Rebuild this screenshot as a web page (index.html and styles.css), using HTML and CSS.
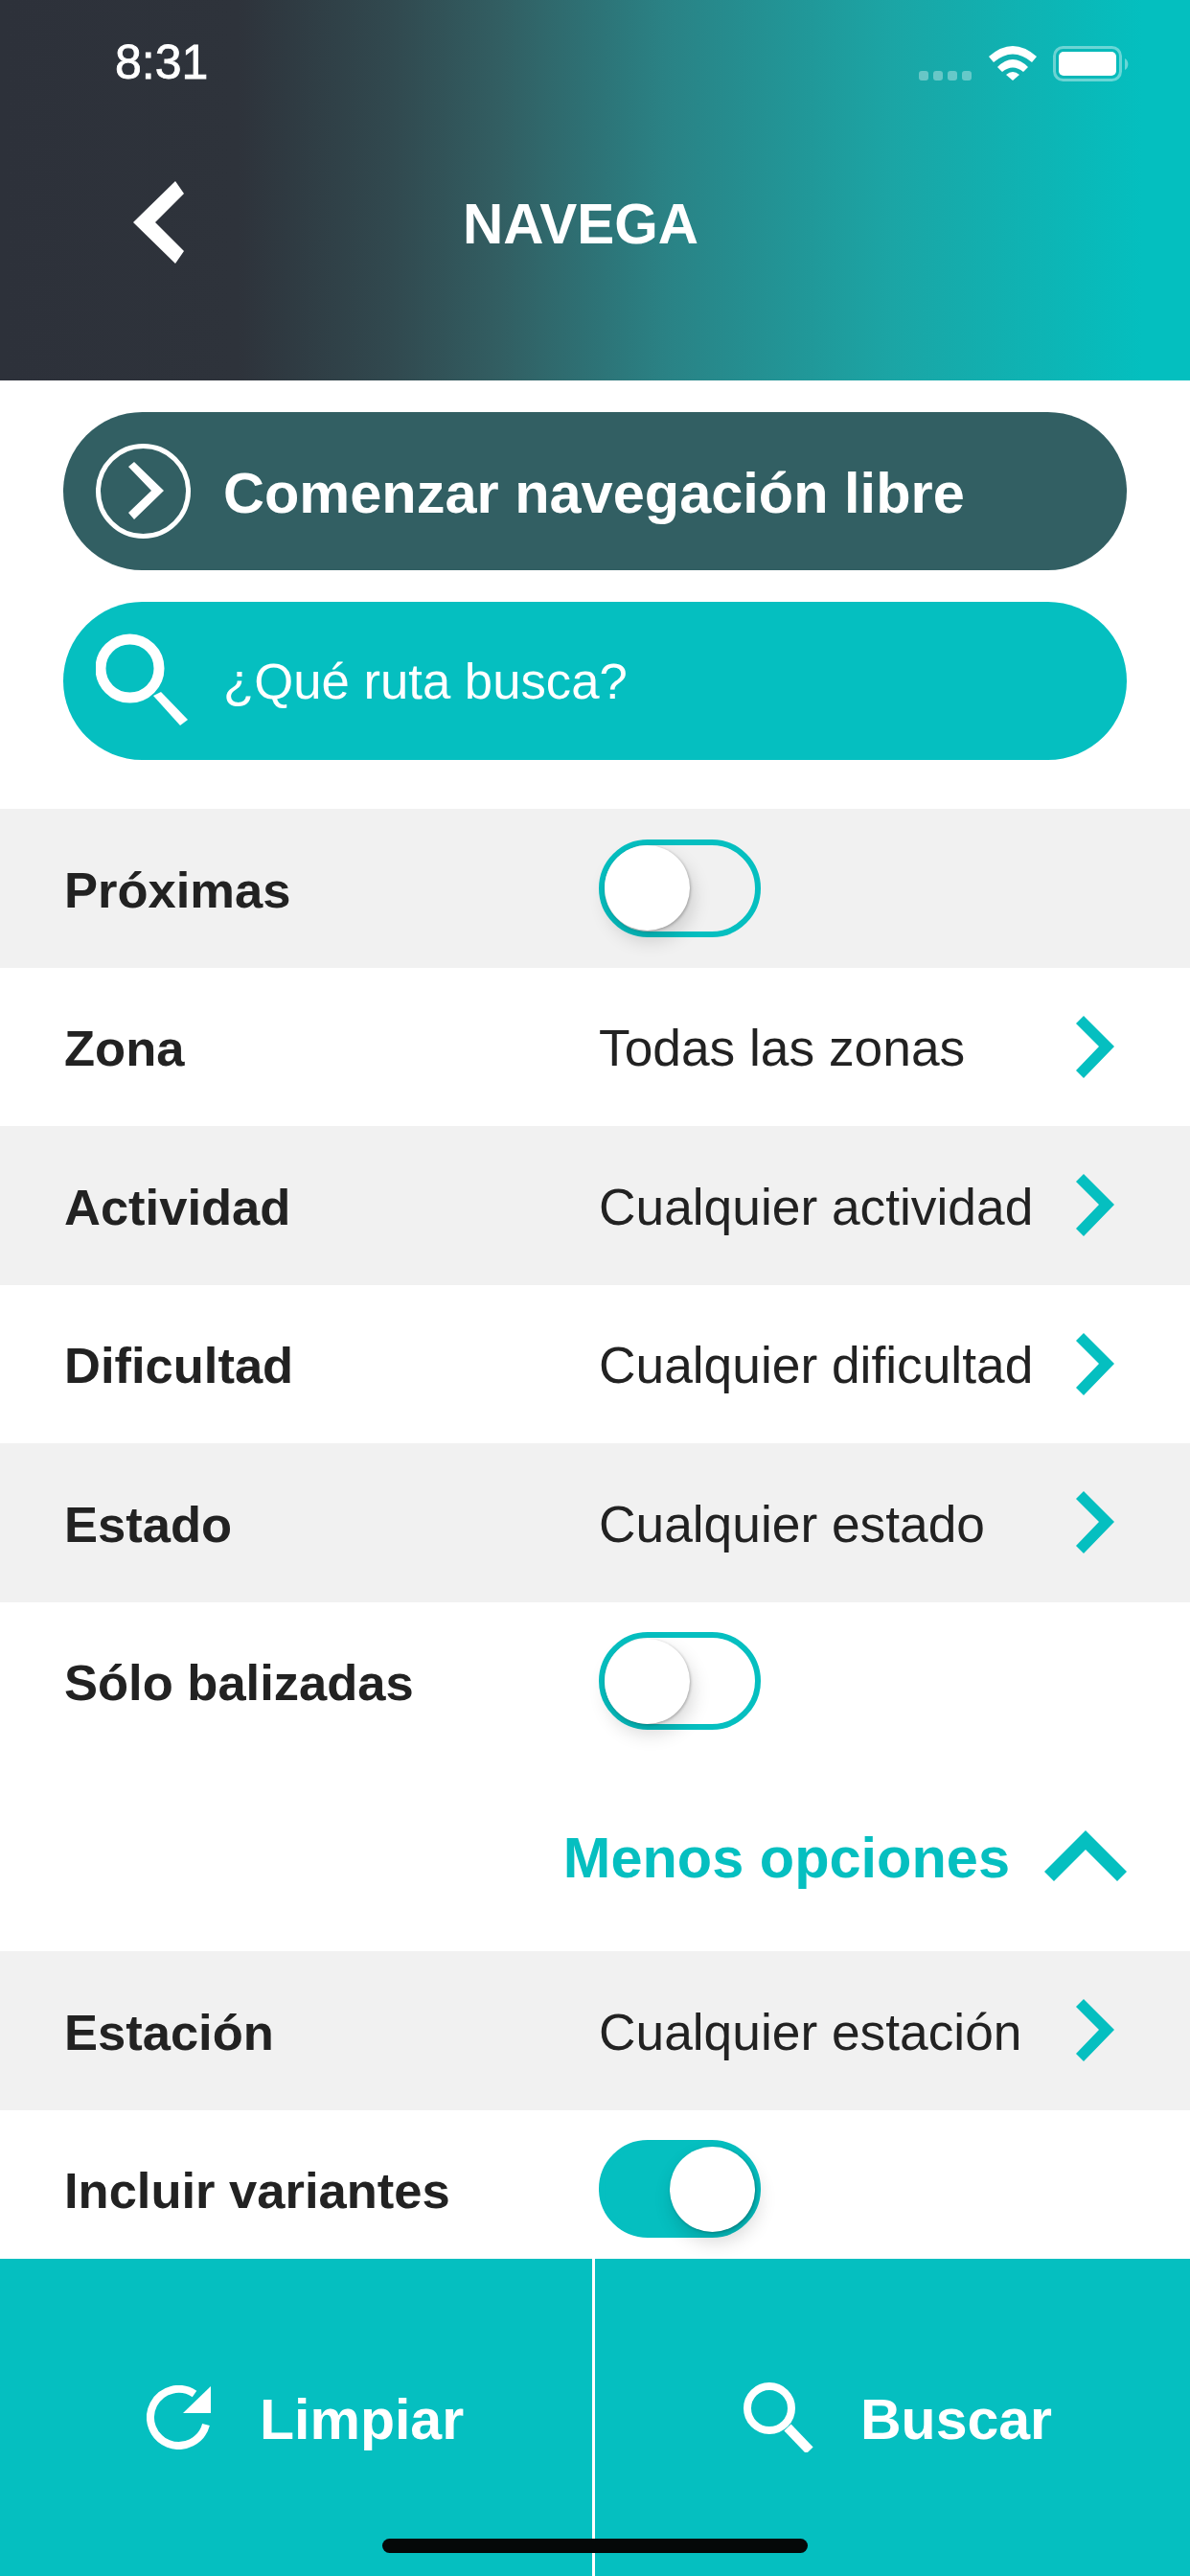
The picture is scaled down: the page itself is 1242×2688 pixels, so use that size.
FILE: index.html
```html
<!DOCTYPE html>
<html>
<head>
	<meta charset="utf-8">
	<title>Navega</title>
	<link rel="stylesheet" href="styles.css">
</head>

<body>
	<div class="page">
		<header class="top">
			<div class="status">
				<span class="time">8:31</span>
				<div class="status-icons">
					<div class="dots"><i></i><i></i><i></i><i></i></div>
					<svg class="wifi" viewBox="0 0 50 36"><path d="M0 11 Q25 -11 50 11 L45 17 Q25 0 5 17 Z"/><path d="M9 22 Q25 6 41 22 L36 27 Q25 18 14 27 Z"/><path d="M18 30 Q25 24 32 30 L25 36 Z"/></svg>
					<svg class="battery" viewBox="0 0 80 37"><rect x="1.5" y="1.5" width="69" height="34" rx="9" fill="none" stroke="#fff" stroke-opacity=".4" stroke-width="3"/><rect x="6" y="6" width="60" height="25" rx="5" fill="#fff"/><path d="M75 13 A7 7 0 0 1 75 25 Z" fill="#fff" fill-opacity=".4"/></svg>
				</div>
			</div>
			<div class="nav">
				<svg class="back" viewBox="0 0 53 86"><path d="M44 0 L53 13 L23 43 L53 73 L44 86 L0 43 Z"/></svg>
				<h1>NAVEGA</h1>
			</div>
		</header>

		<main class="content">
			<div class="pills">
				<a class="pill pill-dark">
					<svg class="pill-icon" viewBox="0 0 99 99"><circle cx="49.5" cy="49.5" r="47" fill="none" stroke="#fff" stroke-width="5"/><path d="M34 24 L40 19 L71 49 L40 79 L34 72 L58 49 Z" fill="#fff"/></svg>
					<span class="pill-strong">Comenzar navegación libre</span>
				</a>
				<a class="pill pill-teal">
					<svg class="pill-icon" viewBox="0 0 99 99"><circle cx="35.5" cy="36.5" r="30.5" fill="none" stroke="#fff" stroke-width="11"/><path d="M60 65 L68 61 L96 90 L88 96 Z" fill="#fff"/></svg>
					<span>¿Qué ruta busca?</span>
				</a>
			</div>

			<div class="row shade">
				<span class="label">Próximas</span>
				<div class="toggle"><i></i></div>
			</div>
			<div class="row">
				<span class="label">Zona</span>
				<span class="value">Todas las zonas</span>
				<svg class="chev" viewBox="0 0 40 65"><path d="M8 0 L40 32 L8 65 L0 57 L24 32 L0 8 Z"/></svg>
			</div>
			<div class="row shade">
				<span class="label">Actividad</span>
				<span class="value">Cualquier actividad</span>
				<svg class="chev" viewBox="0 0 40 65"><path d="M8 0 L40 32 L8 65 L0 57 L24 32 L0 8 Z"/></svg>
			</div>
			<div class="row">
				<span class="label">Dificultad</span>
				<span class="value">Cualquier dificultad</span>
				<svg class="chev" viewBox="0 0 40 65"><path d="M8 0 L40 32 L8 65 L0 57 L24 32 L0 8 Z"/></svg>
			</div>
			<div class="row shade">
				<span class="label">Estado</span>
				<span class="value">Cualquier estado</span>
				<svg class="chev" viewBox="0 0 40 65"><path d="M8 0 L40 32 L8 65 L0 57 L24 32 L0 8 Z"/></svg>
			</div>
			<div class="row">
				<span class="label">Sólo balizadas</span>
				<div class="toggle"><i></i></div>
			</div>

			<div class="more">
				<span>Menos opciones</span>
				<svg class="chev-up" viewBox="0 0 86 53"><path d="M43 0 L86 43 L76 53 L43 20 L10 53 L0 43 Z"/></svg>
			</div>

			<div class="row shade">
				<span class="label">Estación</span>
				<span class="value">Cualquier estación</span>
				<svg class="chev" viewBox="0 0 40 65"><path d="M8 0 L40 32 L8 65 L0 57 L24 32 L0 8 Z"/></svg>
			</div>
			<div class="row">
				<span class="label">Incluir variantes</span>
				<div class="toggle on"><i></i></div>
			</div>
		</main>

		<footer class="bottom">
			<a class="action">
				<svg class="action-icon" viewBox="0 0 67 67"><path d="M50 9 A29.5 29.5 0 1 0 62 41" fill="none" stroke="#fff" stroke-width="8"/><path d="M67 1 L67 29 L38 29 Z" fill="#fff"/></svg>
				<span>Limpiar</span>
			</a>
			<a class="action action-search">
				<svg class="action-icon" viewBox="0 0 73 73"><circle cx="27" cy="27" r="23" fill="none" stroke="#fff" stroke-width="8"/><path d="M46 47 L69 71" fill="none" stroke="#fff" stroke-width="10"/></svg>
				<span>Buscar</span>
			</a>
			<div class="home-bar"></div>
		</footer>
	</div>
</body>
</html>
```

FILE: styles.css
```css
html, body {
	margin: 0;
	padding: 0;
}
body {
	font-family: "Liberation Sans", Arial, sans-serif;
	color: #222222;
	background: #ffffff;
}
.page {
	display: flex;
	flex-direction: column;
	height: 2688px;
	overflow: hidden;
}

/* header */
.top {
	height: 397px;
	flex: none;
	background-image: linear-gradient(to right, #2d313a 0%, #2e333b 20%, #31494f 33%, #325e62 42%, #2a8285 56%, #1ba5a5 75%, #04bfbf 96%);
	color: #ffffff;
}
.status {
	display: flex;
	justify-content: space-between;
	align-items: flex-start;
	height: 189px;
	padding: 37px 63px 0 120px;
	box-sizing: border-box;
}
.time {
	font-size: 50px;
	line-height: 56px;
	-webkit-text-stroke: 0.8px #ffffff;
}
.status-icons {
	display: flex;
	align-items: flex-start;
	padding-top: 11px;
}
.dots {
	display: flex;
	gap: 5px;
	margin-top: 26px;
	margin-right: 18px;
}
.dots i {
	width: 10px;
	height: 10px;
	border-radius: 3px;
	background: #ffffff;
	opacity: 0.35;
}
.wifi {
	width: 50px;
	height: 36px;
	margin-right: 17px;
	fill: #ffffff;
}
.battery {
	width: 80px;
	height: 37px;
}
.nav {
	display: flex;
	align-items: center;
	height: 86px;
	padding-left: 139px;
}
.back {
	width: 53px;
	height: 86px;
	fill: #ffffff;
}
h1 {
	margin: 3px 0 0 291px;
	font-size: 58.5px;
	font-weight: bold;
	line-height: 86px;
}

/* list */
.content {
	flex: 1;
	min-height: 0;
	overflow: hidden;
}
.pills {
	display: flex;
	flex-direction: column;
	gap: 33px;
	padding: 33px 66px 51px;
}
.pill {
	display: flex;
	align-items: center;
	height: 165px;
	border-radius: 83px;
	color: #ffffff;
	font-size: 52.7px;
}
.pill-dark {
	background: #325f63;
}
.pill-teal {
	background: #05bfc0;
}
.pill-icon {
	width: 99px;
	height: 99px;
	margin: 0 34px;
	flex: none;
}
.pill-strong {
	padding-top: 4px;
	font-size: 59.5px;
	font-weight: bold;
}
.row {
	display: flex;
	align-items: center;
	height: 165.5px;
	padding: 0 79px 0 67px;
	font-size: 53.3px;
}
.shade {
	background: #f1f1f1;
}
.label {
	width: 558px;
	padding-top: 3px;
	flex: none;
	font-size: 52.5px;
	font-weight: bold;
}
.value {
	flex: 1;
	padding-top: 3px;
}
.chev {
	width: 40px;
	height: 65px;
	flex: none;
	fill: #05bfc0;
}
.toggle {
	display: flex;
	align-items: center;
	width: 169px;
	height: 102px;
	box-sizing: border-box;
	border: 6.5px solid #05bfc0;
	border-radius: 51px;
}
.toggle i {
	width: 89px;
	height: 89px;
	border-radius: 50%;
	background: #ffffff;
	box-shadow: 1px 1px 3px rgba(0, 0, 0, 0.25), 3px 10px 20px rgba(0, 0, 0, 0.16);
}
.toggle.on {
	justify-content: flex-end;
	background: #05bfc0;
}
.more {
	display: flex;
	justify-content: flex-end;
	align-items: center;
	gap: 36px;
	height: 199px;
	padding-right: 66px;
	color: #05bfc0;
	font-size: 59.5px;
	font-weight: bold;
}
.more span {
	padding-top: 3px;
}
.chev-up {
	width: 86px;
	height: 53px;
	fill: #05bfc0;
}

/* bottom buttons */
.bottom {
	position: relative;
	display: flex;
	height: 331px;
	flex: none;
	background: #05bfc0;
	color: #ffffff;
	font-size: 59px;
	font-weight: bold;
}
.action {
	display: flex;
	align-items: center;
	width: 618px;
	padding-left: 153px;
	box-sizing: border-box;
	flex: none;
}
.action span {
	padding-top: 4px;
}
.action-icon {
	width: 67px;
	height: 67px;
	margin-right: 51px;
	flex: none;
}
.action-search {
	flex: 1;
	width: auto;
	padding-left: 155px;
	border-left: 3px solid #ffffff;
}
.action-search .action-icon {
	width: 73px;
	height: 73px;
	margin-right: 49px;
}
.home-bar {
	position: absolute;
	left: 399px;
	bottom: 24px;
	width: 444px;
	height: 15px;
	border-radius: 8px;
	background: #050808;
}
```
